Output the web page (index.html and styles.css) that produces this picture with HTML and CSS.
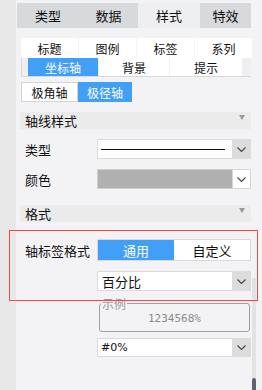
FILE: index.html
```html
<!DOCTYPE html>
<html>
<head>
    <title>坐标轴样式</title>
    <link rel="stylesheet" href="styles.css">
</head>
<body>
    <div class="side"></div>
    <div class="main">
        <div class="tabs">
            <div class="tab t1">类型</div>
            <div class="tab t2">数据</div>
            <div class="tab t3 active">样式</div>
            <div class="tab t4">特效</div>
        </div>

        <div class="content">
            <div class="subtabs">
                <div class="sub">标题</div>
                <div class="sub">图例</div>
                <div class="sub">标签</div>
                <div class="sub">系列</div>
            </div>
            <div class="axisbar">
                <div class="ax on">坐标轴</div>
                <div class="ax">背景</div>
                <div class="ax">提示</div>
            </div>
            <div class="polar">
                <div class="pb">极角轴</div>
                <div class="pb on">极径轴</div>
            </div>

            <div class="sect">轴线样式<span class="tri"></span></div>
            <div class="row">
                <div class="lbl">类型</div>
                <div class="select">
                    <div class="val"><div class="line"></div></div>
                    <div class="arrow gray">
                        <svg width="9" height="5" viewBox="0 0 9 5"><path d="M0.5 0.5 L4.5 4.5 L8.5 0.5" fill="none" stroke="#444" stroke-width="1.1"/></svg>
                    </div>
                </div>
            </div>
            <div class="row">
                <div class="lbl">颜色</div>
                <div class="select">
                    <div class="val swatch"></div>
                    <div class="arrow white">
                        <svg width="9" height="5" viewBox="0 0 9 5"><path d="M0.5 0.5 L4.5 4.5 L8.5 0.5" fill="none" stroke="#444" stroke-width="1.1"/></svg>
                    </div>
                </div>
            </div>

            <div class="sect sect2">格式<span class="tri"></span></div>
            <div class="row row-toggle">
                <div class="lbl">轴标签格式</div>
                <div class="toggle">
                    <div class="tg on">通用</div>
                    <div class="tg">自定义</div>
                </div>
            </div>
            <div class="row">
                <div class="lbl"></div>
                <div class="select">
                    <div class="val text">百分比</div>
                    <div class="arrow gray">
                        <svg width="9" height="5" viewBox="0 0 9 5"><path d="M0.5 0.5 L4.5 4.5 L8.5 0.5" fill="none" stroke="#444" stroke-width="1.1"/></svg>
                    </div>
                </div>
            </div>
            <div class="row row-sample">
                <div class="lbl"></div>
                <fieldset class="sample">
                    <legend>示例</legend>
                    <div class="sample-val">1234568%</div>
                </fieldset>
            </div>
            <div class="row row-fmt">
                <div class="lbl"></div>
                <div class="select">
                    <div class="val text fmt">#0%</div>
                    <div class="arrow gray">
                        <svg width="9" height="5" viewBox="0 0 9 5"><path d="M0.5 0.5 L4.5 4.5 L8.5 0.5" fill="none" stroke="#444" stroke-width="1.1"/></svg>
                    </div>
                </div>
            </div>
        </div>
    </div>

    <div class="scroll"><div class="thumb"></div></div>
    <div class="mark"></div>
</body>
</html>
```

FILE: styles.css
```css
body {
    margin: 0;
    height: 390px;
    overflow: hidden;
    background: #f3f3f5;
    font-family: "Noto Sans CJK SC", "DejaVu Sans", sans-serif;
    font-size: 12px;
    color: #111;
    display: flex;
}

.side {
    width: 16px;
    flex: none;
    background: #e8e8e8;
}

.main {
    width: 236px;
    flex: none;
}

.tabs {
    display: flex;
    margin: 3px 0 0 1px;
    width: 234px;
    height: 25px;
    background: #d8d9dc;
}

.tab {
    display: flex;
    align-items: center;
    justify-content: center;
    font-size: 13px;
}

.t1 { width: 62px; }
.t2 { width: 59px; }
.t3 { width: 62px; }
.t4 { width: 51px; }

.tab.active {
    background: #eeeff1;
}

.content {
    padding-left: 5px;
}

.subtabs {
    display: flex;
    gap: 1px;
    margin-top: 10px;
    width: 231px;
}

.sub {
    width: 57px;
    height: 20px;
    background: #fff;
    display: flex;
    align-items: center;
    justify-content: center;
}

.axisbar {
    display: flex;
    gap: 1px;
    width: 230px;
    height: 19px;
    box-sizing: border-box;
    padding-left: 6px;
    border-left: 1px solid #d9d9d9;
    border-bottom: 1px solid #d9d9d9;
    background: #efeff1;
}

.ax {
    width: 70px;
    background: #fff;
    display: flex;
    align-items: center;
    justify-content: center;
}

.ax:last-child {
    width: 72px;
}

.ax.on, .pb.on, .tg.on {
    background: #419ff5;
    color: #fff;
}

.polar {
    display: flex;
    margin-top: 5px;
    height: 20px;
}

.pb {
    width: 57px;
    box-sizing: border-box;
    border: 1px solid #d6d6d6;
    background: #fff;
    display: flex;
    align-items: center;
    justify-content: center;
}

.pb.on {
    width: 54px;
    border-color: #419ff5;
}

.sect {
    position: relative;
    margin: 10px 0 0 -1px;
    width: 231px;
    height: 17px;
    background: #ebebeb;
    padding-left: 5px;
    box-sizing: border-box;
    display: flex;
    align-items: center;
    font-size: 13px;
}

.sect2 {
    margin-top: 16px;
}

.tri {
    margin-left: auto;
    margin-right: 6px;
    margin-top: -6px;
    width: 0;
    height: 0;
    border-left: 3.5px solid transparent;
    border-right: 3.5px solid transparent;
    border-top: 5px solid #9a9a9a;
}

.row {
    display: flex;
    align-items: center;
    margin-top: 10px;
    padding-left: 4px;
}

.lbl {
    width: 72px;
    flex: none;
    font-size: 13px;
}

.select {
    display: flex;
    width: 154px;
    height: 20px;
}

.val {
    flex: 1;
    box-sizing: border-box;
    border: 1px solid #dadada;
    border-right: none;
    background: #fff;
    display: flex;
    align-items: center;
}

.line {
    margin-left: 3px;
    width: 124px;
    height: 1px;
    background: #111;
}

.swatch {
    background: #b0b0b0;
    border-color: #d0d0d0;
}

.text {
    padding-left: 4px;
    font-size: 13px;
}

.arrow {
    width: 19px;
    box-sizing: border-box;
    display: flex;
    align-items: center;
    justify-content: center;
}

.arrow.gray {
    background: #dcdcdc;
}

.arrow.white {
    background: #fff;
    border: 1px solid #d6d6d6;
}

.row-toggle {
    margin-top: 17px;
}

.toggle {
    display: flex;
    width: 154px;
    height: 22px;
    box-sizing: border-box;
    border: 1px solid #d9d9d9;
    background: #fff;
}

.tg {
    display: flex;
    align-items: center;
    justify-content: center;
    width: 76px;
    font-size: 13px;
}

.tg:last-child {
    flex: 1;
}

.row-sample {
    margin-top: 6px;
}

.sample {
    margin: 0 0 0 2px;
    padding: 0;
    width: 151px;
    height: 35px;
    box-sizing: border-box;
    border: 1px solid #a0a0a0;
    border-radius: 3px;
}

.sample legend {
    margin-left: 1px;
    padding: 0 1px;
    color: #9a9a9a;
    font-size: 12px;
    line-height: 13px;
}

.sample-val {
    text-align: center;
    color: #8a8a8a;
    font-family: "DejaVu Sans Mono", monospace;
    font-size: 11px;
    padding-top: 2px;
}

.row-fmt {
    margin-top: 6px;
}

.row-fmt .select {
    height: 19px;
}

.fmt {
    padding-left: 3px;
    font-family: "DejaVu Sans", sans-serif;
    font-size: 11px;
}

.scroll {
    position: absolute;
    left: 252px;
    top: 278px;
    width: 4px;
    height: 112px;
    background: #e2e2e2;
}

.thumb {
    position: absolute;
    left: 0;
    bottom: -2px;
    width: 4px;
    height: 14px;
    border-radius: 2px;
    background: #5d6670;
}

.mark {
    position: absolute;
    left: 9px;
    top: 230px;
    width: 247px;
    height: 69px;
    border: 1px solid #ff4444;
}
```
